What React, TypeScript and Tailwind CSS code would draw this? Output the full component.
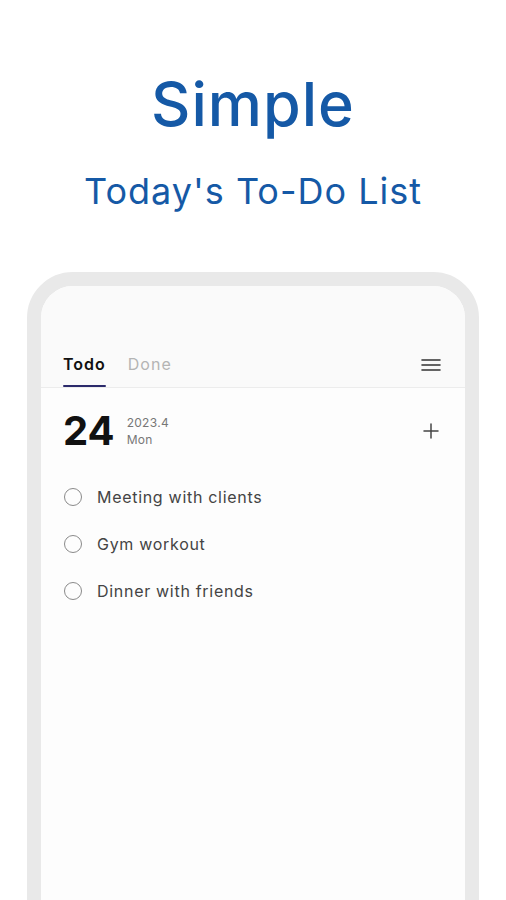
import React from "react";

const font = { fontFamily: "Inter, 'Noto Sans', 'DejaVu Sans', sans-serif" };

const tasks = ["Meeting with clients", "Gym workout", "Dinner with friends"];

function MenuIcon() {
  return (
    <svg width="20" height="14" viewBox="0 0 20 14" fill="none">
      <path d="M1 2h18M1 7h18M1 12h18" stroke="#333" strokeWidth="1.6" strokeLinecap="round" />
    </svg>
  );
}

function PlusIcon() {
  return (
    <svg width="16" height="16" viewBox="0 0 16 16" fill="none">
      <path d="M8 1v14M1 8h14" stroke="#444" strokeWidth="1.5" strokeLinecap="round" />
    </svg>
  );
}

export default function App() {
  return (
    <div className="h-[900px] w-full overflow-hidden bg-white" style={font}>
      {/* ── Heading ── */}
      <div className="flex flex-col items-center pt-[70px]">
        <h1 className="text-[61px] leading-[68px] font-medium text-[#1559a6] tracking-[1px]">Simple</h1>
        <p className="mt-[31px] text-[36px] leading-[44px] text-[#1559a6] tracking-[1px]">Today's To-Do List</p>
      </div>

      {/* ── Phone frame ── */}
      <div className="mx-[27px] mt-[59px] h-[700px] rounded-[46px] border-[14px] border-[#e9e9e9] bg-[#fdfdfd] overflow-hidden">
        {/* header with tabs */}
        <div className="bg-[#fafafa] border-b border-[#ececec] pt-[66px] px-[22px] flex items-end justify-between">
          <div className="flex gap-[22px]">
            <div className="flex flex-col">
              <span className="text-[16px] leading-[24px] font-semibold text-[#111] tracking-[1px] pb-[9px]">Todo</span>
              <span className="h-[2px] bg-[#2b2a6b] rounded-full" />
            </div>
            <span className="text-[16px] leading-[24px] text-[#b4b4b4] tracking-[1px] pb-[11px]">Done</span>
          </div>
          <div className="pb-[15px] pr-[2px]">
            <MenuIcon />
          </div>
        </div>

        {/* date row */}
        <div className="flex items-start justify-between px-[22px] pt-[19px]">
          <div className="flex items-center gap-[12px]">
            <span className="text-[40px] leading-[48px] font-bold text-[#111]">24</span>
            <div className="flex flex-col text-[12px] leading-[17px] text-[#777] tracking-[0.3px]">
              <span>2023.4</span>
              <span>Mon</span>
            </div>
          </div>
          <div className="pt-[16px] pr-[4px]">
            <PlusIcon />
          </div>
        </div>

        {/* task list */}
        <div className="flex flex-col pl-[23px] pt-[30px] gap-[23px]">
          {tasks.map((t) => (
            <div key={t} className="flex items-center gap-[15px]">
              <span className="w-[18px] h-[18px] rounded-full border-[1.5px] border-[#8a8a8a]" />
              <span className="text-[16px] leading-[24px] text-[#444] tracking-[0.7px]">{t}</span>
            </div>
          ))}
        </div>
      </div>
    </div>
  );
}
